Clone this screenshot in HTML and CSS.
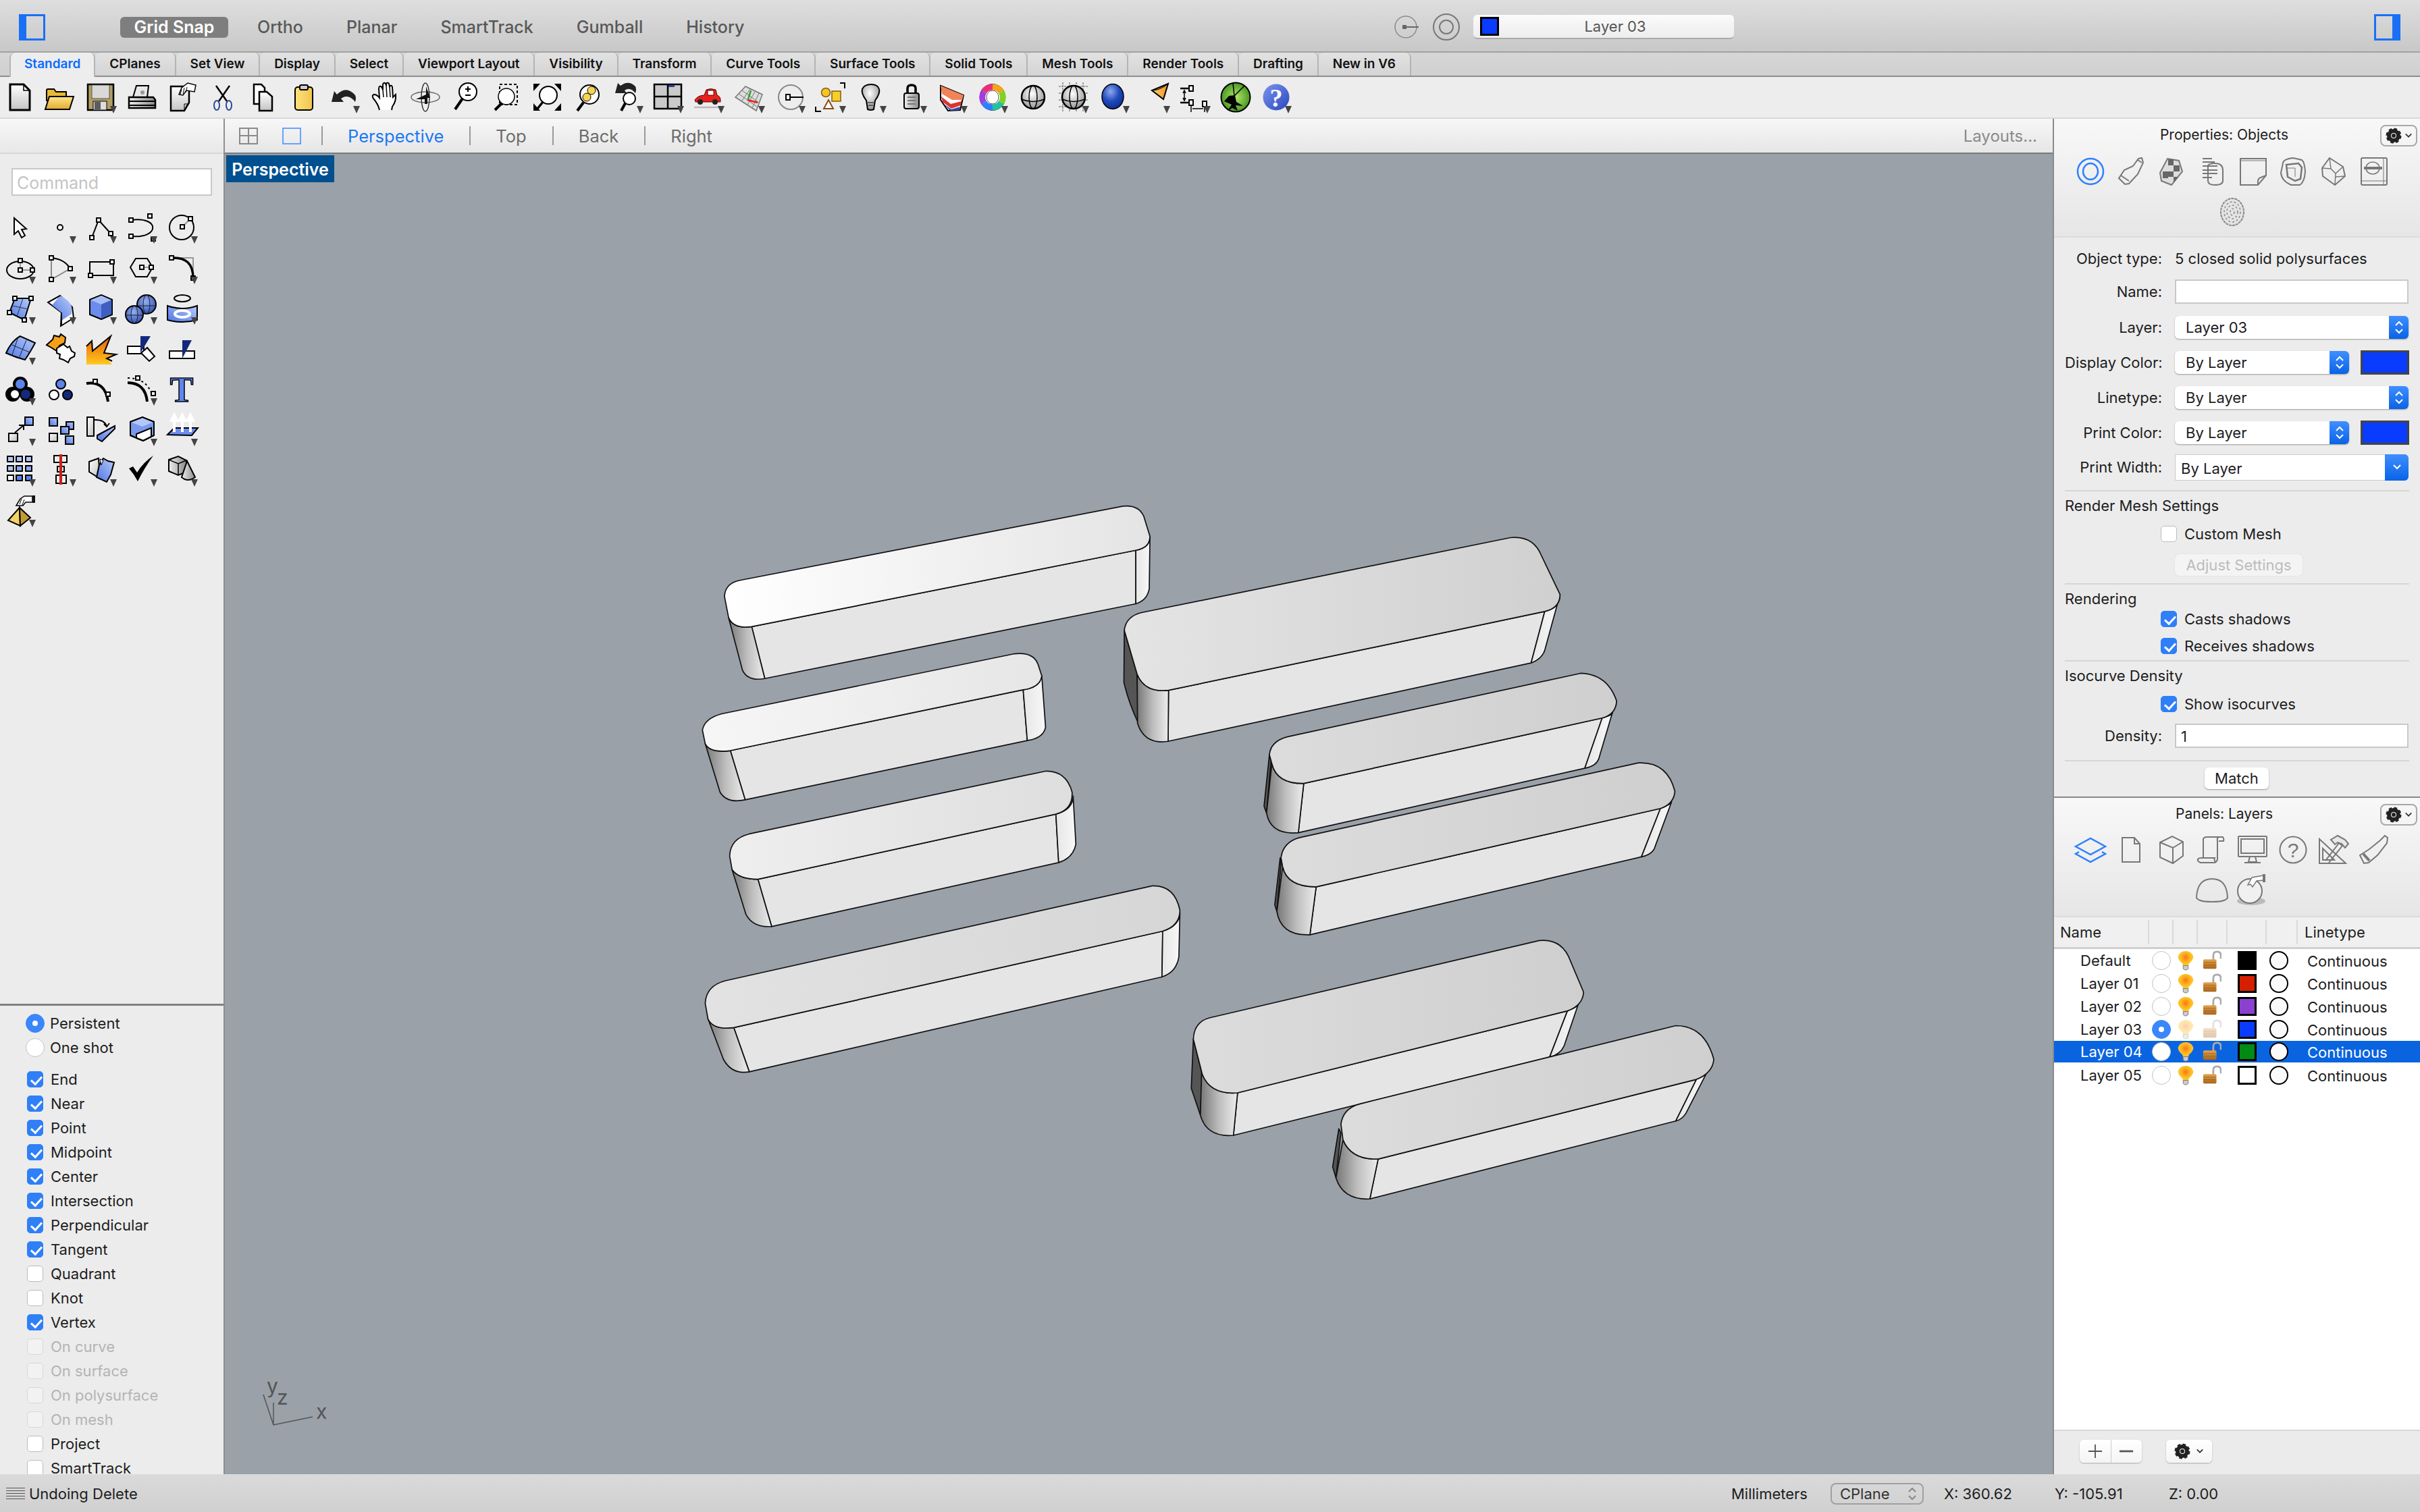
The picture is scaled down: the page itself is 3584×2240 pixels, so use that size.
FILE: index.html
```html
<!DOCTYPE html>
<html lang="en">
<head>
  <meta charset="UTF-8" />
  <title>Rhinoceros</title>
  <link rel="stylesheet" href="styles.css">
</head>
<body>

<!-- shared icons -->
<svg class="sprite" xmlns="http://www.w3.org/2000/svg">
  <defs>
    <linearGradient id="gPaper" x1="0" y1="0" x2="0" y2="1"><stop offset="0" stop-color="#fff"/><stop offset="1" stop-color="#c4c4c4"/></linearGradient>
    <linearGradient id="gYellow" x1="0" y1="0" x2="0" y2="1"><stop offset="0" stop-color="#ffe88a"/><stop offset="1" stop-color="#e0a92e"/></linearGradient>
    <linearGradient id="gClip" x1="0" y1="0" x2="1" y2="0"><stop offset="0" stop-color="#ffe27c"/><stop offset="1" stop-color="#f0c44c"/></linearGradient>
    <linearGradient id="gBlue" x1="0" y1="1" x2="1" y2="0"><stop offset="0" stop-color="#4d74e2"/><stop offset="1" stop-color="#b9ccfb"/></linearGradient>
    <linearGradient id="gWhite" x1="0" y1="0" x2="1" y2="1"><stop offset="0" stop-color="#fff"/><stop offset="1" stop-color="#bdbdbd"/></linearGradient>
    <linearGradient id="gGray" x1="0" y1="0" x2="1" y2="0"><stop offset="0" stop-color="#eee"/><stop offset="1" stop-color="#8a8a8a"/></linearGradient>
    <linearGradient id="gFire" x1="0" y1="0" x2="0" y2="1"><stop offset="0" stop-color="#e85d08"/><stop offset="1" stop-color="#ffc81e"/></linearGradient>
    <linearGradient id="gCone" x1="0" y1="0" x2="1" y2="0"><stop offset="0" stop-color="#ffd27a"/><stop offset="1" stop-color="#f2901e"/></linearGradient>
    <radialGradient id="gBall" cx=".4" cy=".3" r=".8"><stop offset="0" stop-color="#8fa9ec"/><stop offset=".5" stop-color="#1f49bd"/><stop offset="1" stop-color="#0a2a80"/></radialGradient>
    <radialGradient id="gGrayBall" cx=".45" cy=".35" r=".7"><stop offset="0" stop-color="#fff"/><stop offset="1" stop-color="#8b8b8b"/></radialGradient>
    <radialGradient id="gSphereBlue" cx=".45" cy=".35" r=".7"><stop offset="0" stop-color="#97b0f0"/><stop offset="1" stop-color="#2c4aa8"/></radialGradient>
    <radialGradient id="gGreen" cx=".5" cy=".5" r=".55"><stop offset="0" stop-color="#b4e86a"/><stop offset="1" stop-color="#3e8f1c"/></radialGradient>
    <linearGradient id="gHelp" x1="0" y1="0" x2="1" y2="1"><stop offset="0" stop-color="#7c94ea"/><stop offset="1" stop-color="#2a46c2"/></linearGradient>
    <radialGradient id="gBulb" cx=".5" cy=".4" r=".6"><stop offset="0" stop-color="#f6761a"/><stop offset=".5" stop-color="#fdb71d"/><stop offset="1" stop-color="#ffd23a"/></radialGradient>
    <linearGradient id="gLock" x1="0" y1="0" x2="0" y2="1"><stop offset="0" stop-color="#e6a54e"/><stop offset="1" stop-color="#a9641c"/></linearGradient>
  </defs>

  <!-- top toolbar -->
  <symbol id="t-new" viewBox="0 0 60 60"><path d="M15 11H35L44 20V49H15Z" fill="url(#gPaper)" stroke="#000" stroke-width="3"/><path d="M35 11V20H44" fill="none" stroke="#000" stroke-width="1.5"/></symbol>
  <symbol id="t-open" viewBox="0 0 60 60"><path d="M9 36V20q0-2 2-2h9l3 4h15v8" fill="#e8b838" stroke="#000" stroke-width="2"/><path d="M7 48 13 29H49L43 48Z" fill="url(#gYellow)" stroke="#000" stroke-width="2"/></symbol>
  <symbol id="t-save" viewBox="0 0 60 60"><rect x="10" y="11" width="38" height="38" fill="#b39d62" stroke="#000" stroke-width="2.5"/><rect x="16" y="12" width="26" height="20" fill="#d9d9d9" stroke="#555"/><rect x="18" y="36" width="20" height="13" fill="#ddd" stroke="#000"/><rect x="20" y="37" width="9" height="11" fill="#5c5c5c"/></symbol>
  <symbol id="t-print" viewBox="0 0 60 60"><path d="M17 30 22 13H40L38 30Z" fill="#e8e8e8" stroke="#000" stroke-width="2"/><circle cx="31" cy="23" r="3" fill="#999"/><path d="M11 30H47L50 34V46H11Z" fill="url(#gGray)" stroke="#000" stroke-width="2.5"/><path d="M11 36H50M11 42H50" stroke="#000" stroke-width="2"/></symbol>
  <symbol id="t-setup" viewBox="0 0 60 60"><path d="M13 14H40V38L33 50H13Z" fill="url(#gPaper)" stroke="#000" stroke-width="2.5"/><path d="M33 50V40H40" fill="none" stroke="#000"/><path d="M25 26 29 16 38 9 50 12 48 22 36 20 31 27Z" fill="#fff" stroke="#000" stroke-width="1.5"/><path d="M29 18 27 26M33 16 31 25M37 15 35 23" stroke="#000"/></symbol>
  <symbol id="t-cut" viewBox="0 0 60 60"><path d="M20 13 36 36M40 13 24 36" stroke="#000" stroke-width="2.5"/><ellipse cx="21" cy="42" rx="4" ry="7" fill="none" stroke="#2a4a9c" stroke-width="2"/><ellipse cx="39" cy="42" rx="4" ry="7" fill="none" stroke="#2a4a9c" stroke-width="2"/></symbol>
  <symbol id="t-copy" viewBox="0 0 60 60"><path d="M16 11H27L32 16V40H16Z" fill="#fff" stroke="#000" stroke-width="2.5"/><path d="M24 22H35L43 29V50H24Z" fill="url(#gPaper)" stroke="#000" stroke-width="2.5"/></symbol>
  <symbol id="t-paste" viewBox="0 0 60 60"><rect x="17" y="15" width="26" height="34" rx="4" fill="url(#gClip)" stroke="#000" stroke-width="2"/><rect x="24" y="12" width="12" height="7" rx="2" fill="#d0d0d0" stroke="#000" stroke-width="2"/></symbol>
  <symbol id="t-undo" viewBox="0 0 60 60"><path d="M11 37 15 21 19 26Q33 12 46 27 48 31 46 37 36 24 25 32L29 37Z" fill="#222"/></symbol>
  <symbol id="t-hand" viewBox="0 0 60 60"><path d="M22 49Q20 40 13 32 10 27 14 26 18 26 22 31L21 18Q21 13 24 14 26 15 27 19V11Q28 8 30 9 32 10 32 13V10Q34 7 36 10L37 14Q40 11 41 15L42 30 46 26Q47 36 41 44L40 49" fill="#fff" stroke="#000" stroke-width="2"/><path d="M27 19 28 30M32 13 33 30M37 14 38 30" stroke="#000" stroke-width="1.5"/></symbol>
  <symbol id="t-orbit" viewBox="0 0 60 60"><ellipse cx="30" cy="30" rx="21" ry="8" fill="none" stroke="#666" stroke-width="1.5"/><ellipse cx="30" cy="30" rx="6" ry="21" fill="none" stroke="#333" stroke-width="1.5"/><path d="M31 14 37 31H33V40H29V33H16L31 26Z" fill="#111"/></symbol>
  <symbol id="t-zoomin" viewBox="0 0 60 60"><circle cx="33" cy="22" r="13" fill="#fff" stroke="#000" stroke-width="2"/><path d="M25 32 14 48" stroke="#000" stroke-width="4"/><path d="M33 14V22M29 18H37M29 27H37" stroke="#000" stroke-width="2"/></symbol>
  <symbol id="t-zoomwin" viewBox="0 0 60 60"><rect x="20" y="11" width="26" height="30" fill="none" stroke="#000" stroke-width="2" stroke-dasharray="4 3"/><circle cx="30" cy="29" r="12" fill="#fff" stroke="#000" stroke-width="1.5"/><path d="M23 39 13 49" stroke="#000" stroke-width="4"/></symbol>
  <symbol id="t-zoomext" viewBox="0 0 60 60"><path d="M10 10H20L10 21ZM51 10H41L51 21ZM10 50H20L10 39ZM51 50H41L51 39Z" fill="#000"/><circle cx="32" cy="27" r="13" fill="#fff" stroke="#000" stroke-width="2"/><path d="M24 37 16 47" stroke="#000" stroke-width="3.5"/></symbol>
  <symbol id="t-zoomsel" viewBox="0 0 60 60"><circle cx="33" cy="26" r="14" fill="#fff" stroke="#000" stroke-width="2"/><circle cx="36" cy="20" r="6" fill="#f7d44e" stroke="#000"/><circle cx="29" cy="30" r="6" fill="#f7d44e" stroke="#000"/><path d="M24 38 15 50" stroke="#000" stroke-width="4"/></symbol>
  <symbol id="t-undoview" viewBox="0 0 60 60"><path d="M11 24 15 9 19 13Q31 4 41 14 43 18 41 24 33 14 25 20L28 24Z" fill="#222"/><circle cx="32" cy="32" r="9" fill="#fff" stroke="#000" stroke-width="2"/><path d="M26 39 20 50" stroke="#000" stroke-width="4"/></symbol>
  <symbol id="t-fourview" viewBox="0 0 60 60"><rect x="9" y="11" width="40" height="36" fill="#c9c9c9" stroke="#000" stroke-width="2.5"/><path d="M29 11V47M9 29H49" stroke="#000" stroke-width="2.5"/><rect x="30" y="12" width="9" height="3" fill="#2a3f95"/></symbol>
  <symbol id="t-car" viewBox="0 0 60 60"><path d="M9 34Q14 27 23 27L26 19Q32 16 40 19L42 27Q48 29 47 37H10Z" fill="#e5231c" stroke="#600" stroke-width="1"/><rect x="28" y="20" width="9" height="7" fill="#fff" stroke="#600"/><circle cx="17" cy="37" r="4" fill="#222"/><circle cx="39" cy="37" r="4" fill="#222"/><path d="M8 45H48" stroke="#bbb" stroke-width="2.5"/></symbol>
  <symbol id="t-cplane" viewBox="0 0 60 60"><path d="M24 14 49 26 40 50 9 30Z" fill="#ddd" stroke="#777" stroke-width="1.5"/><path d="M19 20 44 38M14 25 41 44M31 18 19 35M38 22 27 41M44 24 34 46" stroke="#777"/><path d="M27 34 42 38" stroke="#e0211c" stroke-width="2.5"/><path d="M28 33 32 20" stroke="#2ca02c" stroke-width="2.5"/></symbol>
  <symbol id="t-target" viewBox="0 0 60 60"><circle cx="31" cy="30" r="18" fill="none" stroke="#888" stroke-width="2"/><rect x="24" y="26" width="6" height="8" fill="#fff" stroke="#000" stroke-width="2"/><path d="M30 30H50" stroke="#000" stroke-width="2"/></symbol>
  <symbol id="t-shapes" viewBox="0 0 60 60"><circle cx="23" cy="23" r="6.5" fill="#f4c52a" stroke="#8a5a10" stroke-width="1.5"/><rect x="32" y="21" width="13" height="15" fill="#f4d02a" stroke="#8a5a10" stroke-width="1.5"/><path d="M27 34 34 47H20Z" fill="#fff" stroke="#8a4a10" stroke-width="2"/><path d="M44 9H51V17M8 44V51H16" fill="none" stroke="#000" stroke-width="2"/></symbol>
  <symbol id="t-bulb" viewBox="0 0 60 60"><path d="M23 35Q15 24 17 18 20 11 30 11 40 11 42 18 44 24 36 35L34 48Q30 50 25 48Z" fill="url(#gGrayBall)" stroke="#000" stroke-width="2"/><path d="M25 38H34M26 42H33" stroke="#000"/></symbol>
  <symbol id="t-lock" viewBox="0 0 60 60"><path d="M24 24V17Q24 12 30 12 36 12 36 17V24" fill="none" stroke="#000" stroke-width="3.5"/><rect x="19" y="24" width="22" height="23" rx="3" fill="url(#gGray)" stroke="#000" stroke-width="2"/><path d="M24 30H36M24 35H36M24 40H36" stroke="#777" stroke-width="2"/></symbol>
  <symbol id="t-wedge" viewBox="0 0 60 60"><path d="M13 13 47 27 42 49 24 50 13 34Z" fill="#fff" stroke="#000" stroke-width="2"/><path d="M13 13 47 27 45 34 30 34 15 25Z" fill="#f28358"/><path d="M14 29 28 40 44 36 43 42 29 47 16 37Z" fill="#d33"/><path d="M18 40 29 48 42 44 41 49 27 50Z" fill="#2f4fa5"/></symbol>
  <symbol id="t-ring" viewBox="0 0 60 60"><ellipse cx="30" cy="30" rx="18.500" ry="19" fill="#fff" stroke="#000" stroke-width="1.500"/><g fill="none" stroke-width="9"><path d="M30 15A15 15 0 0 1 43 22" stroke="#f6a21d"/><path d="M43 22A15 15 0 0 1 43 38" stroke="#7ed321"/><path d="M43 38A15 15 0 0 1 30 45" stroke="#25c0a0"/><path d="M30 45A15 15 0 0 1 17 38" stroke="#2f80ff"/><path d="M17 38A15 15 0 0 1 17 22" stroke="#9b3fe0"/><path d="M17 22A15 15 0 0 1 30 15" stroke="#e8307a"/></g><ellipse cx="30" cy="30" rx="9" ry="10" fill="#fff" stroke="#555"/></symbol>
  <symbol id="t-sphere" viewBox="0 0 60 60"><circle cx="30" cy="30" r="17" fill="url(#gGrayBall)" stroke="#000" stroke-width="2.500"/><ellipse cx="30" cy="30" rx="6" ry="17" fill="none" stroke="#000" stroke-width="1.500"/><path d="M13 33Q30 40 47 33" fill="none" stroke="#000" stroke-width="1.500"/></symbol>
  <symbol id="t-gridsphere" viewBox="0 0 60 60"><path d="M8 14H52M8 24H52M8 34H52M8 44H52M14 8V52M24 8V52M34 8V52M44 8V52" stroke="#888" stroke-width="1.500" stroke-dasharray="3 1"/><circle cx="30" cy="30" r="17" fill="url(#gGrayBall)" stroke="#000" stroke-width="2.500"/><ellipse cx="30" cy="30" rx="6" ry="17" fill="none" stroke="#000" stroke-width="1.500"/><path d="M13 33Q30 40 47 33" fill="none" stroke="#000" stroke-width="1.500"/></symbol>
  <symbol id="t-ball" viewBox="0 0 60 60"><ellipse cx="28" cy="29" rx="16" ry="18.500" fill="url(#gBall)" stroke="#000" stroke-width="1.500"/></symbol>
  <symbol id="t-cone" viewBox="0 0 60 60"><path d="M26 20 50 10 43 33Z" fill="url(#gCone)" stroke="#000" stroke-width="2"/><path d="M26 20Q38 20 50 10" fill="none" stroke="#000"/></symbol>
  <symbol id="t-dims" viewBox="0 0 60 60"><path d="M8 17H22M8 38H22" stroke="#000" stroke-width="2.500"/><rect x="21" y="13" width="6" height="8" fill="#fff" stroke="#000" stroke-width="2"/><rect x="21" y="34" width="6" height="8" fill="#fff" stroke="#000" stroke-width="2"/><rect x="41" y="36" width="6" height="8" fill="#fff" stroke="#000" stroke-width="2"/><path d="M14 20V35M24 42V52M44 44V52M12 24 14 20 16 24M12 31 14 35 16 31M26 47H42" fill="none" stroke="#000" stroke-width="1.500"/></symbol>
  <symbol id="t-food" viewBox="0 0 60 60"><circle cx="30" cy="30" r="21.500" fill="url(#gGreen)" stroke="#000" stroke-width="2"/><path d="M26 9 28 28 43 13" fill="none" stroke="#000" stroke-width="1.500"/><path d="M20 28 29 27 31 37 41 43 30 42 33 50 25 46 18 50 24 41 13 36Z" fill="#000"/></symbol>

  <!-- left tool grid -->
  <symbol id="l-arrow" viewBox="0 0 60 60"><path d="M21 16V40L27 35 32 45 37 42 32 33 39 32Z" fill="#fff" stroke="#000" stroke-width="2"/></symbol>
  <symbol id="l-point" viewBox="0 0 60 60"><circle cx="29" cy="30" r="4" fill="#fff" stroke="#000" stroke-width="2"/></symbol>
  <symbol id="l-poly" viewBox="0 0 60 60"><path d="M16 45 26 19 44 39" fill="none" stroke="#000" stroke-width="2"/><g fill="#fff" stroke="#000" stroke-width="2"><rect x="13" y="42" width="6" height="6"/><rect x="23" y="16" width="6" height="6"/><rect x="41" y="36" width="6" height="6"/></g></symbol>
  <symbol id="l-curve" viewBox="0 0 60 60"><path d="M14 19C57 13 57 47 14 43" fill="none" stroke="#000" stroke-width="2"/><g fill="#fff" stroke="#000" stroke-width="2"><rect x="11" y="16" width="6" height="6"/><rect x="39" y="10" width="6" height="6"/><rect x="11" y="40" width="6" height="6"/><rect x="44" y="44" width="6" height="6"/></g></symbol>
  <symbol id="l-circle" viewBox="0 0 60 60"><circle cx="29" cy="30" r="18" fill="none" stroke="#000" stroke-width="2"/><path d="M30 29 42 17" stroke="#999" stroke-width="2"/><g fill="#fff" stroke="#000" stroke-width="2"><rect x="27" y="26" width="6" height="6"/><rect x="39" y="14" width="6" height="6"/></g></symbol>
  <symbol id="l-ellipse" viewBox="0 0 60 60"><ellipse cx="30" cy="33" rx="20" ry="13" fill="none" stroke="#000" stroke-width="2"/><path d="M30 19V33H48" fill="none" stroke="#999" stroke-width="2"/><g fill="#fff" stroke="#000" stroke-width="2"><rect x="27" y="16" width="6" height="6"/><rect x="27" y="30" width="6" height="6"/><rect x="45" y="30" width="6" height="6"/></g></symbol>
  <symbol id="l-arc" viewBox="0 0 60 60"><path d="M16 15V47L44 31" fill="none" stroke="#888" stroke-width="2"/><path d="M16 15Q36 17 44 31" fill="none" stroke="#000" stroke-width="2"/><g fill="#fff" stroke="#000" stroke-width="2"><rect x="13" y="12" width="6" height="6"/><rect x="13" y="44" width="6" height="6"/><rect x="41" y="28" width="6" height="6"/></g></symbol>
  <symbol id="l-rect" viewBox="0 0 60 60"><rect x="13" y="21" width="35" height="20" fill="none" stroke="#000" stroke-width="2"/><g fill="#fff" stroke="#000" stroke-width="2"><rect x="43" y="18" width="6" height="6"/><rect x="11" y="38" width="6" height="6"/></g></symbol>
  <symbol id="l-hex" viewBox="0 0 60 60"><path d="M13 29 21 16H38L46 29 38 43H21Z" fill="none" stroke="#000" stroke-width="2"/><path d="M30 29H44" stroke="#999" stroke-width="2"/><g fill="#fff" stroke="#000" stroke-width="2"><rect x="27" y="26" width="6" height="6"/><rect x="41" y="26" width="6" height="6"/></g></symbol>
  <symbol id="l-fillet" viewBox="0 0 60 60"><path d="M14 15H46V45" fill="none" stroke="#999" stroke-width="2"/><path d="M14 15Q46 13 46 45" fill="none" stroke="#000" stroke-width="3.500"/><g fill="#fff" stroke="#000" stroke-width="2"><rect x="11" y="12" width="6" height="6"/><rect x="43" y="42" width="6" height="6"/></g></symbol>
  <symbol id="l-surfpts" viewBox="0 0 60 60"><path d="M22 15H46L36 47 14 36Z" fill="url(#gBlue)" stroke="#000" stroke-width="2"/><path d="M34 15 25 42M18 26 42 31" stroke="#234" stroke-width="1"/><g fill="#fff" stroke="#000" stroke-width="2"><rect x="19" y="12" width="6" height="6"/><rect x="43" y="12" width="6" height="6"/><rect x="11" y="33" width="6" height="6"/><rect x="33" y="44" width="6" height="6"/></g></symbol>
  <symbol id="l-bend" viewBox="0 0 60 60"><path d="M11 21 29 11 47 28 49 44 30 56 31 36Z" fill="#fff" stroke="#000" stroke-width="2"/><path d="M17 25 29 11Q43 18 46 27V38L31 48 31 36Z" fill="url(#gBlue)"/><path d="M11 21 29 11M31 36V56" stroke="#000" stroke-width="2"/></symbol>
  <symbol id="l-cube" viewBox="0 0 60 60"><path d="M13 17 30 10 46 17V39L30 46 13 39Z" fill="#6b8ceb" stroke="#000" stroke-width="2"/><path d="M13 17 30 24 46 17 30 10Z" fill="#a6bdf7"/><path d="M30 24 46 17V39L30 46Z" fill="#3f5fc0"/><path d="M13 17 30 10 46 17V39L30 46 13 39Z" fill="none" stroke="#000" stroke-width="1.500"/></symbol>
  <symbol id="l-spheres" viewBox="0 0 60 60"><circle cx="37" cy="24" r="14" fill="url(#gSphereBlue)" stroke="#000" stroke-width="2"/><ellipse cx="37" cy="24" rx="5" ry="14" fill="none" stroke="#123"/><path d="M23 26H51" stroke="#123"/><circle cx="19" cy="39" r="13" fill="url(#gSphereBlue)" stroke="#000" stroke-width="2"/><ellipse cx="19" cy="39" rx="5" ry="13" fill="none" stroke="#123"/><path d="M6 40H32" stroke="#123"/></symbol>
  <symbol id="l-band" viewBox="0 0 60 60"><ellipse cx="30" cy="15" rx="12" ry="5" fill="none" stroke="#000" stroke-width="2"/><path d="M8 26Q30 34 52 26V47Q30 53 8 47Z" fill="url(#gBlue)" stroke="#000" stroke-width="2"/><ellipse cx="30" cy="38" rx="11" ry="5" fill="none" stroke="#fff" stroke-width="4"/></symbol>
  <symbol id="l-sheet" viewBox="0 0 60 60"><path d="M9 36Q17 18 30 11L52 21Q44 36 37 46Q22 42 9 36Z" fill="url(#gBlue)" stroke="#000" stroke-width="2"/><path d="M18 24 44 35M26 15 18 39M39 17 28 44" stroke="#123"/></symbol>
  <symbol id="l-puzzle" viewBox="0 0 60 60"><path d="M9 24 18 16 20 10 28 12 30 8 37 13 36 21 28 25 24 33 16 28Z" fill="#f6a01a" stroke="#000" stroke-width="2"/><path d="M24 29 34 23 40 28 43 26 46 33 51 36 50 41 44 44 41 50 34 46 28 44 29 38 24 36Z" fill="#fff" stroke="#000" stroke-width="2"/></symbol>
  <symbol id="l-boom" viewBox="0 0 60 60"><path d="M8 53V26L16 18 17 33 44 11 34 36 52 38 38 44 46 53Z" fill="url(#gFire)"/><path d="M8 26 16 18 17 33 44 11 34 36 52 38 38 44 46 48" fill="none" stroke="#000" stroke-width="2"/></symbol>
  <symbol id="l-chamfer" viewBox="0 0 60 60"><rect x="9" y="26" width="24" height="11" fill="#fff" stroke="#000" stroke-width="2"/><path d="M28 11H43L28 36Z" fill="#15297a"/><path d="M29 36 38 28 49 41 41 48Z" fill="#fff" stroke="#000" stroke-width="2"/></symbol>
  <symbol id="l-trim" viewBox="0 0 60 60"><rect x="11" y="33" width="37" height="11" fill="#fff" stroke="#000" stroke-width="2"/><path d="M30 17H44L30 44Z" fill="#15297a"/></symbol>
  <symbol id="l-union" viewBox="0 0 60 60"><circle cx="30" cy="22" r="11" fill="#000"/><circle cx="19" cy="37" r="11" fill="#000"/><circle cx="40" cy="37" r="11" fill="#000"/><circle cx="30" cy="22" r="7" fill="#5c83ea"/><circle cx="22" cy="37" r="6" fill="#fff"/><circle cx="38" cy="37" r="7" fill="#15297a"/></symbol>
  <symbol id="l-dots" viewBox="0 0 60 60"><circle cx="30" cy="22" r="7" fill="#5c83ea" stroke="#000" stroke-width="2"/><circle cx="20" cy="38" r="7" fill="#fff" stroke="#000" stroke-width="2"/><circle cx="40" cy="38" r="7" fill="#15297a" stroke="#000" stroke-width="2"/></symbol>
  <symbol id="l-thickarc" viewBox="0 0 60 60"><path d="M8 21Q36 17 40 48" fill="none" stroke="#000" stroke-width="4"/><g fill="#fff" stroke="#000" stroke-width="2"><rect x="18" y="15" width="6" height="6"/><rect x="37" y="34" width="6" height="6"/></g></symbol>
  <symbol id="l-offset" viewBox="0 0 60 60"><path d="M9 20Q35 20 38 48" fill="none" stroke="#000" stroke-width="4"/><path d="M9 13Q38 13 46 40" fill="none" stroke="#000" stroke-width="2" stroke-dasharray="3 4"/><g fill="#fff" stroke="#000" stroke-width="2"><rect x="21" y="10" width="6" height="6"/><rect x="44" y="33" width="6" height="6"/></g></symbol>
  <symbol id="l-move" viewBox="0 0 60 60"><rect x="13" y="35" width="13" height="12" fill="url(#gWhite)" stroke="#000" stroke-width="2"/><rect x="37" y="11" width="12" height="12" fill="url(#gBlue)" stroke="#000" stroke-width="2"/><path d="M22 34 35 23M28 23H35V30" fill="none" stroke="#000" stroke-width="2"/></symbol>
  <symbol id="l-copyobj" viewBox="0 0 60 60"><g stroke="#000" stroke-width="2"><rect x="13" y="12" width="12" height="12" fill="url(#gBlue)"/><rect x="38" y="18" width="11" height="11" fill="url(#gBlue)"/><rect x="30" y="25" width="12" height="11" fill="url(#gBlue)"/><rect x="13" y="35" width="12" height="12" fill="url(#gWhite)"/><rect x="37" y="39" width="12" height="12" fill="url(#gBlue)"/></g></symbol>
  <symbol id="l-rotate" viewBox="0 0 60 60"><rect x="9" y="11" width="10" height="28" fill="url(#gWhite)" stroke="#000" stroke-width="2"/><path d="M24 38 50 24 50 28 31 47 24 43Z" fill="url(#gBlue)" stroke="#000" stroke-width="2"/><path d="M19 15Q35 14 38 25M34 21 38 25 42 20" fill="none" stroke="#000" stroke-width="2"/></symbol>
  <symbol id="l-notch" viewBox="0 0 60 60"><path d="M13 18 31 11 48 18V38L32 46 13 38Z" fill="#7a99ee" stroke="#000" stroke-width="2"/><path d="M13 18 31 25 48 18 31 11Z" fill="#b3c6f9"/><path d="M32 32 44 27V40L32 46 22 42V36Z" fill="#fff" stroke="#000" stroke-width="2"/><path d="M13 18 31 11 48 18V38L32 46 13 38Z" fill="none" stroke="#000" stroke-width="2"/></symbol>
  <symbol id="l-extrude" viewBox="0 0 60 60"><path d="M8 37 18 27H53L44 38Z" fill="#6d8ef0" stroke="#000" stroke-width="2"/><path d="M18 33V15M14 16 18 8 22 16ZM30 33V15M26 16 30 8 34 16ZM42 33V15M38 16 42 8 46 16Z" fill="#fff" stroke="#fff" stroke-width="4"/></symbol>
  <symbol id="l-array" viewBox="0 0 60 60"><g stroke="#000" stroke-width="2"><rect x="11" y="9" width="9" height="8" fill="#b4c6f6"/><rect x="24" y="9" width="9" height="8" fill="#b4c6f6"/><rect x="38" y="9" width="9" height="8" fill="#b4c6f6"/><rect x="11" y="23" width="9" height="8" fill="#b4c6f6"/><rect x="24" y="23" width="9" height="8" fill="#8fa8ef"/><rect x="38" y="23" width="9" height="8" fill="#8fa8ef"/><rect x="11" y="37" width="9" height="8" fill="#fff"/><rect x="24" y="37" width="9" height="8" fill="#5c83ea"/><rect x="38" y="37" width="9" height="8" fill="#5c83ea"/></g></symbol>
  <symbol id="l-mirror" viewBox="0 0 60 60"><g stroke="#000" stroke-width="2" fill="#eee"><rect x="20" y="8" width="19" height="10"/><rect x="25" y="24" width="10" height="8"/><rect x="23" y="37" width="15" height="12"/></g><path d="M30 6V51" stroke="#c9211a" stroke-width="4"/></symbol>
  <symbol id="l-split" viewBox="0 0 60 60"><path d="M12 17 26 12 28 42 12 32Z" fill="url(#gWhite)" stroke="#000" stroke-width="2"/><path d="M27 22 33 12 40 16 49 18 44 36 38 47 23 40Z" fill="url(#gBlue)" stroke="#000" stroke-width="2"/><path d="M28 13 33 15 30 22Z" fill="#fff" stroke="#000"/></symbol>
  <symbol id="l-check" viewBox="0 0 60 60"><path d="M11 27 17 24 23 33Q32 18 47 8 34 26 24 46 19 36 11 27Z" fill="#000"/></symbol>
  <symbol id="l-solids" viewBox="0 0 60 60"><path d="M10 14 24 9 36 15V32L24 37 10 31Z" fill="url(#gGray)" stroke="#000" stroke-width="2"/><path d="M10 14 24 20 36 15M24 20V37" fill="none" stroke="#000" stroke-width="1.500"/><path d="M37 16 49 40Q38 48 29 40Z" fill="url(#gGray)" stroke="#000" stroke-width="2"/></symbol>
  <symbol id="l-gumball" viewBox="0 0 60 60"><path d="M24 22 30 12 36 8H48V17H38L34 22Z" fill="#fff" stroke="#000" stroke-width="1.500"/><path d="M32 12 29 20M36 13 33 21" stroke="#000"/><rect x="48" y="7" width="4" height="11" fill="#111"/><path d="M12 44 29 25 30 52Z" fill="#f4d264" stroke="#000" stroke-width="2"/><path d="M29 25 45 40 30 52Z" fill="#c29a34" stroke="#000" stroke-width="2"/></symbol>

  <!-- properties and layer tabs -->
  <symbol id="p-object" viewBox="0 0 60 60"><ellipse cx="30" cy="30" rx="19" ry="19" fill="none" stroke="#2f80ff" stroke-width="2.500"/><ellipse cx="30" cy="30" rx="11" ry="12" fill="none" stroke="#2f80ff" stroke-width="2.500"/></symbol>
  <symbol id="p-tube" viewBox="0 0 60 60"><path d="M12 40 20 28 33 22 41 11 46 10 48 17 40 34 27 48 21 49Z" fill="none" stroke="#777" stroke-width="2"/><path d="M15 36 27 44M40 13 46 17" stroke="#777" stroke-width="2"/></symbol>
  <symbol id="p-check" viewBox="0 0 60 60"><path d="M13 32 24 11 41 14 46 30 30 50 15 44Z" fill="#ddd" stroke="#777" stroke-width="2"/><path d="M25 12H33V21H25ZM33 21H42V30H33ZM17 30H25V40H17ZM33 38H25V30H33ZM33 38H40L33 47Z" fill="#666"/></symbol>
  <symbol id="p-attrs" viewBox="0 0 60 60"><path d="M16 11H30M16 16H34M16 22H38M16 28H38M16 33H38M16 39H30" stroke="#777" stroke-width="2"/><path d="M24 22Q24 18 34 18 46 18 46 28V44Q46 50 34 50 24 50 24 44Z" fill="none" stroke="#777" stroke-width="2"/></symbol>
  <symbol id="p-page" viewBox="0 0 60 60"><path d="M12 11H50V36L38 50H12Z" fill="none" stroke="#777" stroke-width="2"/><path d="M12 14H50" stroke="#777"/><path d="M38 50Q37 40 42 39L50 36" fill="none" stroke="#777" stroke-width="2"/></symbol>
  <symbol id="p-box" viewBox="0 0 60 60"><path d="M15 18Q15 12 30 10L43 13Q47 16 48 30 47 46 40 50H27Q13 44 12 32Z" fill="none" stroke="#777" stroke-width="2"/><path d="M20 20 38 18 43 24 41 41 33 44 22 38Z" fill="none" stroke="#777" stroke-width="2.500"/><path d="M20 25H33V38" fill="none" stroke="#777"/></symbol>
  <symbol id="p-bent" viewBox="0 0 60 60"><path d="M13 25 24 10 44 23 47 37 32 50 14 37Z" fill="none" stroke="#777" stroke-width="2"/><path d="M13 25 26 26 33 33 44 23M26 26 24 10M33 33 32 50M33 38 47 37" fill="none" stroke="#777" stroke-width="1.500"/></symbol>
  <symbol id="p-decal" viewBox="0 0 60 60"><rect x="11" y="10" width="38" height="40" rx="2" fill="none" stroke="#777" stroke-width="2"/><path d="M11 44H49M44 10V50" stroke="#777"/><ellipse cx="28" cy="25" rx="10" ry="9" fill="none" stroke="#777" stroke-width="1.500"/><path d="M15 25H42" stroke="#777" stroke-width="4"/></symbol>
  <symbol id="p-bump" viewBox="0 0 60 60"><ellipse cx="30" cy="30" rx="17" ry="20" fill="#e4e4e4" stroke="#888" stroke-width="2" stroke-dasharray="4 1"/><g fill="none" stroke="#888" stroke-width="1.500" stroke-dasharray="3 3"><ellipse cx="30" cy="30" rx="12" ry="15"/><ellipse cx="30" cy="30" rx="8" ry="10"/><ellipse cx="30" cy="30" rx="3" ry="5"/></g></symbol>
  <symbol id="g-layers" viewBox="0 0 60 60"><path d="M8 25 30 13 52 25 30 37Z" fill="none" stroke="#2f80ff" stroke-width="2.500"/><path d="M13 33 8 36 30 48 52 36 47 33" fill="none" stroke="#2f80ff" stroke-width="2.500"/></symbol>
  <symbol id="g-doc" viewBox="0 0 60 60"><path d="M17 12H35L43 21V48H17ZM35 12V21H43" fill="none" stroke="#777" stroke-width="2"/></symbol>
  <symbol id="g-cube" viewBox="0 0 60 60"><path d="M13 19 31 10 47 18V39L32 50 13 41ZM13 19 32 27 47 18M32 27V50" fill="none" stroke="#777" stroke-width="2"/></symbol>
  <symbol id="g-scroll" viewBox="0 0 60 60"><path d="M17 42V14Q18 11 22 11H46Q48 14 47 17H40M40 11Q37 12 38 17V44Q37 49 32 49H13Q8 47 9 44 10 42 14 42H34Q32 45 36 49" fill="none" stroke="#777" stroke-width="2"/></symbol>
  <symbol id="g-monitor" viewBox="0 0 60 60"><rect x="9" y="10" width="42" height="30" rx="1" fill="none" stroke="#777" stroke-width="2"/><rect x="13" y="14" width="34" height="21" fill="none" stroke="#777" stroke-width="2"/><path d="M26 40 24 48H36L34 40M18 49H42" fill="none" stroke="#777" stroke-width="2"/></symbol>
  <symbol id="g-tools" viewBox="0 0 60 60"><path d="M9 14V50H48ZM14 28V45H31Z" fill="none" stroke="#777" stroke-width="2"/><path d="M18 46 38 20M23 49 43 24 38 20" fill="none" stroke="#777" stroke-width="2"/><path d="M26 15 36 9 47 15 52 21 47 27 42 21 36 19 32 22Z" fill="#e8e8e8" stroke="#777" stroke-width="2"/></symbol>
  <symbol id="g-tube" viewBox="0 0 60 60"><path d="M9 38 23 29 39 16 46 9 50 12 49 20 35 38 22 49 15 50Z" fill="none" stroke="#777" stroke-width="2"/><path d="M14 36 23 46" stroke="#777" stroke-width="4"/></symbol>
  <symbol id="g-dome" viewBox="0 0 60 60"><path d="M7 41Q8 13 30 13 52 13 53 41 50 47 30 47 10 47 7 41Z" fill="none" stroke="#777" stroke-width="2"/></symbol>
  <symbol id="g-drop" viewBox="0 0 60 60"><ellipse cx="28" cy="46" rx="21" ry="6" fill="#bbb"/><circle cx="26" cy="31" r="18" fill="#f0f0f0" stroke="#777" stroke-width="2"/><path d="M23 22 29 11 46 8V15L36 16 30 25 27 21Z" fill="#fff" stroke="#777" stroke-width="1.500"/><rect x="45" y="6" width="4" height="12" fill="#777"/></symbol>

  <!-- small bits -->
  <symbol id="gear" viewBox="0 0 24 24"><circle cx="12" cy="12" r="7" fill="none" stroke="#222" stroke-width="6"/><circle cx="12" cy="12" r="9" fill="none" stroke="#222" stroke-width="5" stroke-dasharray="4.100 3"/><circle cx="12" cy="12" r="3" fill="#222"/></symbol>
  <symbol id="updown" viewBox="0 0 14 22"><path d="M2 8 7 3 12 8M2 14 7 19 12 14" fill="none" stroke="currentColor" stroke-width="2"/></symbol>
  <symbol id="chev" viewBox="0 0 14 10"><path d="M2 2 7 7 12 2" fill="none" stroke="currentColor" stroke-width="2"/></symbol>
  <symbol id="bulb" viewBox="0 0 28 32"><path d="M9 21Q1 14 2 9 5 1 14 1 23 1 26 9 27 14 19 21L18 26H10Z" fill="url(#gBulb)"/><path d="M10 24H18V29Q14 33 10 29Z" fill="#ccc" stroke="#777"/></symbol>
  <symbol id="lock" viewBox="0 0 30 32"><path d="M17 17V8Q17 2 23 2 29 2 29 8V13" fill="none" stroke="#aaa" stroke-width="3"/><rect x="1" y="14" width="21" height="15" rx="2" fill="url(#gLock)"/><path d="M2 19H21M2 23H21" stroke="#8a5414" stroke-dasharray="2 1"/></symbol>
</svg>

<header class="titlebar">
  <svg class="side-toggle" viewBox="0 0 39 39"><rect x="1.500" y="1.500" width="36" height="36" fill="none" stroke="#1a6ff5" stroke-width="3"/><rect x="1" y="1" width="10" height="37" fill="#1a6ff5"/></svg>
  <nav class="modes">
    <span class="mode on">Grid Snap</span>
    <span class="mode">Ortho</span>
    <span class="mode">Planar</span>
    <span class="mode">SmartTrack</span>
    <span class="mode">Gumball</span>
    <span class="mode">History</span>
  </nav>
  <div class="title-status">
    <svg class="ring-btn small" viewBox="0 0 38 34"><circle cx="19" cy="17" r="16" fill="none" stroke="#8b8b8b" stroke-width="1.500"/><rect x="14" y="14" width="6" height="6" fill="#666"/><path d="M20 17H38" stroke="#666" stroke-width="2"/></svg>
    <svg class="ring-btn" viewBox="0 0 40 42"><circle cx="20" cy="21" r="19" fill="none" stroke="#777" stroke-width="2"/><circle cx="20" cy="21" r="10" fill="none" stroke="#777" stroke-width="2"/></svg>
    <div class="layer-pick"><span class="layer-swatch"></span><span class="layer-pick-name">Layer 03</span></div>
  </div>
  <svg class="side-toggle right" viewBox="0 0 39 39"><rect x="1.500" y="1.500" width="36" height="36" fill="none" stroke="#1a6ff5" stroke-width="3"/><rect x="27" y="1" width="11" height="37" fill="#1a6ff5"/></svg>
</header>

<div class="tabbar">
  <span class="tab active">Standard</span>
  <span class="tab">CPlanes</span>
  <span class="tab">Set View</span>
  <span class="tab">Display</span>
  <span class="tab">Select</span>
  <span class="tab">Viewport Layout</span>
  <span class="tab">Visibility</span>
  <span class="tab">Transform</span>
  <span class="tab">Curve Tools</span>
  <span class="tab">Surface Tools</span>
  <span class="tab">Solid Tools</span>
  <span class="tab">Mesh Tools</span>
  <span class="tab">Render Tools</span>
  <span class="tab">Drafting</span>
  <span class="tab">New in V6</span>
</div>

<div class="toolbar">
  <span class="tool"><svg><use href="#t-new"/></svg></span>
  <span class="tool"><svg><use href="#t-open"/></svg></span>
  <span class="tool menu"><svg><use href="#t-save"/></svg></span>
  <span class="tool"><svg><use href="#t-print"/></svg></span>
  <span class="tool"><svg><use href="#t-setup"/></svg></span>
  <span class="tool"><svg><use href="#t-cut"/></svg></span>
  <span class="tool"><svg><use href="#t-copy"/></svg></span>
  <span class="tool"><svg><use href="#t-paste"/></svg></span>
  <span class="tool menu"><svg><use href="#t-undo"/></svg></span>
  <span class="tool"><svg><use href="#t-hand"/></svg></span>
  <span class="tool"><svg><use href="#t-orbit"/></svg></span>
  <span class="tool"><svg><use href="#t-zoomin"/></svg></span>
  <span class="tool"><svg><use href="#t-zoomwin"/></svg></span>
  <span class="tool"><svg><use href="#t-zoomext"/></svg></span>
  <span class="tool"><svg><use href="#t-zoomsel"/></svg></span>
  <span class="tool menu"><svg><use href="#t-undoview"/></svg></span>
  <span class="tool menu"><svg><use href="#t-fourview"/></svg></span>
  <span class="tool menu"><svg><use href="#t-car"/></svg></span>
  <span class="tool menu"><svg><use href="#t-cplane"/></svg></span>
  <span class="tool menu"><svg><use href="#t-target"/></svg></span>
  <span class="tool menu"><svg><use href="#t-shapes"/></svg></span>
  <span class="tool menu"><svg><use href="#t-bulb"/></svg></span>
  <span class="tool menu"><svg><use href="#t-lock"/></svg></span>
  <span class="tool menu"><svg><use href="#t-wedge"/></svg></span>
  <span class="tool menu"><svg><use href="#t-ring"/></svg></span>
  <span class="tool"><svg><use href="#t-sphere"/></svg></span>
  <span class="tool menu"><svg><use href="#t-gridsphere"/></svg></span>
  <span class="tool menu"><svg><use href="#t-ball"/></svg></span>
  <span class="tool menu"><svg><use href="#t-cone"/></svg></span>
  <span class="tool menu"><svg><use href="#t-dims"/></svg></span>
  <span class="tool"><svg><use href="#t-food"/></svg></span>
  <span class="tool menu"><svg viewBox="0 0 60 60"><circle cx="30" cy="30" r="19.500" fill="url(#gHelp)"/><text class="icon-help" x="30" y="44" text-anchor="middle">?</text></svg></span>
</div>

<main class="workspace">
  <aside class="left-panel">
    <div class="left-head"></div>
    <div class="left-tools">
      <div class="command">Command</div>
      <div class="tool-grid">
        <span class="tool"><svg><use href="#l-arrow"/></svg></span>
        <span class="tool menu"><svg><use href="#l-point"/></svg></span>
        <span class="tool menu"><svg><use href="#l-poly"/></svg></span>
        <span class="tool menu"><svg><use href="#l-curve"/></svg></span>
        <span class="tool menu"><svg><use href="#l-circle"/></svg></span>
        <span class="tool menu"><svg><use href="#l-ellipse"/></svg></span>
        <span class="tool menu"><svg><use href="#l-arc"/></svg></span>
        <span class="tool menu"><svg><use href="#l-rect"/></svg></span>
        <span class="tool menu"><svg><use href="#l-hex"/></svg></span>
        <span class="tool menu"><svg><use href="#l-fillet"/></svg></span>
        <span class="tool menu"><svg><use href="#l-surfpts"/></svg></span>
        <span class="tool menu"><svg><use href="#l-bend"/></svg></span>
        <span class="tool menu"><svg><use href="#l-cube"/></svg></span>
        <span class="tool menu"><svg><use href="#l-spheres"/></svg></span>
        <span class="tool menu"><svg><use href="#l-band"/></svg></span>
        <span class="tool menu"><svg><use href="#l-sheet"/></svg></span>
        <span class="tool"><svg><use href="#l-puzzle"/></svg></span>
        <span class="tool"><svg><use href="#l-boom"/></svg></span>
        <span class="tool"><svg><use href="#l-chamfer"/></svg></span>
        <span class="tool"><svg><use href="#l-trim"/></svg></span>
        <span class="tool menu"><svg><use href="#l-union"/></svg></span>
        <span class="tool"><svg><use href="#l-dots"/></svg></span>
        <span class="tool"><svg><use href="#l-thickarc"/></svg></span>
        <span class="tool menu"><svg><use href="#l-offset"/></svg></span>
        <span class="tool"><svg viewBox="0 0 60 60"><text class="icon-t" x="29" y="48" text-anchor="middle">T</text></svg></span>
        <span class="tool menu"><svg><use href="#l-move"/></svg></span>
        <span class="tool"><svg><use href="#l-copyobj"/></svg></span>
        <span class="tool"><svg><use href="#l-rotate"/></svg></span>
        <span class="tool menu"><svg><use href="#l-notch"/></svg></span>
        <span class="tool menu"><svg><use href="#l-extrude"/></svg></span>
        <span class="tool menu"><svg><use href="#l-array"/></svg></span>
        <span class="tool menu"><svg><use href="#l-mirror"/></svg></span>
        <span class="tool menu"><svg><use href="#l-split"/></svg></span>
        <span class="tool menu"><svg><use href="#l-check"/></svg></span>
        <span class="tool menu"><svg><use href="#l-solids"/></svg></span>
        <span class="tool menu"><svg><use href="#l-gumball"/></svg></span>
      </div>
    </div>
    <div class="snaps">
      <label class="snap"><span class="radio on"></span>Persistent</label>
      <label class="snap"><span class="radio"></span>One shot</label>
      <div class="snap-list">
        <label class="snap"><span class="check on"></span>End</label>
        <label class="snap"><span class="check on"></span>Near</label>
        <label class="snap"><span class="check on"></span>Point</label>
        <label class="snap"><span class="check on"></span>Midpoint</label>
        <label class="snap"><span class="check on"></span>Center</label>
        <label class="snap"><span class="check on"></span>Intersection</label>
        <label class="snap"><span class="check on"></span>Perpendicular</label>
        <label class="snap"><span class="check on"></span>Tangent</label>
        <label class="snap"><span class="check"></span>Quadrant</label>
        <label class="snap"><span class="check"></span>Knot</label>
        <label class="snap"><span class="check on"></span>Vertex</label>
        <label class="snap off"><span class="check"></span>On curve</label>
        <label class="snap off"><span class="check"></span>On surface</label>
        <label class="snap off"><span class="check"></span>On polysurface</label>
        <label class="snap off"><span class="check"></span>On mesh</label>
        <label class="snap"><span class="check"></span>Project</label>
        <label class="snap"><span class="check"></span>SmartTrack</label>
      </div>
    </div>
  </aside>

  <section class="center">
    <div class="view-tabs">
      <svg class="pane-icon" viewBox="0 0 28 25"><path d="M1 1H27V24H1ZM14 1V24M1 12H27" fill="none" stroke="#8a8a8a" stroke-width="2"/></svg>
      <svg class="pane-icon single" viewBox="0 0 28 25"><rect x="1" y="1" width="26" height="23" fill="none" stroke="#3d8bff" stroke-width="1.500"/></svg>
      <span class="view-tab active">Perspective</span>
      <span class="view-tab">Top</span>
      <span class="view-tab">Back</span>
      <span class="view-tab">Right</span>
      <span class="layouts">Layouts...</span>
    </div>
    <div class="viewport">
      <svg class="model" viewBox="333 228 2707 1956" xmlns="http://www.w3.org/2000/svg">
        <defs>
          <linearGradient id="capDark" x1="0" y1="0" x2="1" y2="0"><stop offset="0" stop-color="#777"/><stop offset=".5" stop-color="#bdbdbd"/><stop offset="1" stop-color="#ededed"/></linearGradient>
          <linearGradient id="capLight" x1="0" y1="0" x2="1" y2="0"><stop offset="0" stop-color="#e6e6e6"/><stop offset="1" stop-color="#f8f8f8"/></linearGradient>
          <linearGradient id="topA" x1="0" y1="0" x2="1" y2="0"><stop offset="0" stop-color="#fff"/><stop offset="1" stop-color="#e4e4e4"/></linearGradient>
          <linearGradient id="topB" x1="0" y1="0" x2="1" y2="0"><stop offset="0" stop-color="#f6f6f6"/><stop offset="1" stop-color="#e6e6e6"/></linearGradient>
          <linearGradient id="topC" x1="0" y1="0" x2="1" y2="0"><stop offset="0" stop-color="#eee"/><stop offset="1" stop-color="#dedede"/></linearGradient>
          <linearGradient id="topD" x1="0" y1="0" x2="1" y2="0"><stop offset="0" stop-color="#e2e2e2"/><stop offset="1" stop-color="#d6d6d6"/></linearGradient>
          <linearGradient id="topE" x1="0" y1="0" x2="1" y2="0"><stop offset="0" stop-color="#e4e4e4"/><stop offset="1" stop-color="#d0d0d0"/></linearGradient>
          <linearGradient id="topF" x1="0" y1="0" x2="1" y2="0"><stop offset="0" stop-color="#dcdcdc"/><stop offset="1" stop-color="#cfcfcf"/></linearGradient>
        </defs>

        <!-- left group, traced at 1.96 x 1.742 -->
        <g transform="translate(1000 720) scale(.5102 .574)">
          <path class="wall" d="M222 363 1337 166 1337 304 260 497Z"/>
          <path class="cap-d" d="M155 340Q170 370 222 363L260 497Q210 505 195 475Z"/>
          <path class="cap-l" d="M1337 166Q1378 160 1378 130L1376 265Q1370 295 1337 304Z"/>
          <path fill="url(#topA)" d="M143 285Q145 250 190 243L1300 52Q1345 48 1360 78L1378 130Q1378 160 1337 166L222 363Q170 370 155 340Z"/>

          <path class="wall" d="M160 683 1010 526 1022 657 203 810Z"/>
          <path class="cap-d" d="M87 665Q100 690 160 683L203 810Q150 820 130 790Z"/>
          <path class="cap-l" d="M1010 526Q1060 520 1064 490L1075 622Q1070 650 1022 657Z"/>
          <path fill="url(#topB)" d="M79 630Q85 600 135 588L985 433Q1040 428 1053 460L1064 490Q1060 520 1010 526L160 683Q100 690 87 665Z"/>

          <path class="wall" d="M240 1015 1105 847 1113 972 280 1137Z"/>
          <path class="cap-d" d="M165 990Q185 1015 240 1015L280 1137Q225 1140 205 1105Z"/>
          <path class="cap-l" d="M1105 847Q1155 835 1155 800L1163 925Q1155 960 1113 972Z"/>
          <path fill="url(#topC)" d="M158 955Q160 910 215 898L1075 736Q1135 735 1152 790 1155 835 1105 847L240 1015Q185 1015 165 990Z"/>

          <path class="wall" d="M170 1398 1415 1149 1413 1267 215 1512Z"/>
          <path class="cap-d" d="M95 1375Q110 1405 170 1398L215 1512Q165 1520 140 1480Z"/>
          <path class="cap-l" d="M1415 1149Q1465 1135 1465 1100L1462 1215Q1455 1255 1413 1267Z"/>
          <path fill="url(#topD)" d="M87 1335Q90 1290 145 1277L1385 1032Q1450 1030 1465 1095 1465 1135 1415 1149L170 1398Q110 1405 95 1375Z"/>
        </g>

        <!-- right group, traced at 1.633 x 1.508 -->
        <g transform="translate(1640 760) scale(.6122 .6633)">
          <path class="wall" d="M148 396 1058 220 1025 335 147 510Z"/>
          <path class="sliver" d="M41 262 72 360 75 470Q50 420 40 378Z"/>
          <path class="cap-d" d="M72 360Q90 402 148 396L147 510Q90 518 73 470Z"/>
          <path class="cap-l" d="M1058 220Q1095 212 1095 182L1060 300Q1055 325 1025 335Z"/>
          <path fill="url(#topE)" d="M41 262Q45 230 85 222L975 55Q1030 50 1050 95L1095 182Q1095 212 1058 220L148 396Q90 402 72 360Z"/>

          <path class="wall" d="M475 604 1197 458 1155 570 462 714Z"/>
          <path class="sliver" d="M396 555 385 670 379 655 392 540Z"/>
          <path class="cap-d" d="M398 560Q410 605 475 604L462 714Q395 720 385 670Z"/>
          <path class="cap-l" d="M1197 458Q1225 450 1222 445L1190 545Q1185 565 1155 570Z"/>
          <path fill="url(#topF)" d="M392 540Q395 510 435 500L1145 358Q1210 360 1232 420 1230 450 1197 458L475 604Q410 605 398 560Z"/>

          <path class="wall" d="M505 835 1338 660 1292 768 490 942Z"/>
          <path class="sliver" d="M420 785 410 890 405 875 418 770Z"/>
          <path class="cap-d" d="M424 790Q435 835 505 835L490 942Q420 945 410 890Z"/>
          <path class="cap-l" d="M1338 660Q1365 650 1365 645L1325 745Q1320 762 1292 768Z"/>
          <path fill="url(#topF)" d="M420 770Q425 735 465 725L1285 558Q1355 555 1373 622 1370 650 1338 660L505 835Q435 835 424 790Z"/>

          <path class="wall" d="M315 1295 1113 1112 1070 1215 305 1390Z"/>
          <path class="sliver" d="M208 1175 230 1255 225 1345 203 1285Z"/>
          <path class="cap-d" d="M228 1250Q250 1300 315 1295L305 1390Q240 1395 225 1345Z"/>
          <path class="cap-l" d="M1113 1112Q1140 1103 1140 1095L1105 1190Q1095 1210 1070 1215Z"/>
          <path fill="url(#topF)" d="M208 1175Q210 1135 250 1127L1045 955Q1100 950 1120 1000L1152 1070Q1150 1100 1113 1112L315 1295Q250 1300 230 1255Z"/>

          <path class="wall" d="M655 1443 1425 1265 1375 1358 635 1532Z"/>
          <path class="sliver" d="M565 1385 553 1485 545 1460 560 1375Z"/>
          <path class="cap-d" d="M570 1400Q590 1445 655 1443L635 1532Q570 1535 553 1485Z"/>
          <path class="cap-l" d="M1425 1265Q1450 1255 1450 1250L1400 1340Q1390 1355 1375 1358Z"/>
          <path fill="url(#topF)" d="M565 1365Q570 1330 610 1320L1375 1145Q1445 1145 1467 1220 1465 1250 1425 1265L655 1443Q590 1445 570 1400Z"/>
        </g>

        <!-- world axes -->
        <g class="axes">
          <path d="M390 2066 405 2111 405 2078M405 2111 463 2099"/>
          <text x="395" y="2064">y</text>
          <text x="410" y="2081">z</text>
          <text x="468" y="2102">x</text>
        </g>
      </svg>
      <div class="view-label">Perspective</div>
    </div>
  </section>

  <aside class="right-panel">
    <section class="props">
      <div class="panel-head">
        <div class="panel-title">Properties: Objects</div>
        <span class="gear-btn"><svg class="gear"><use href="#gear"/></svg><svg class="chev"><use href="#chev"/></svg></span>
        <div class="panel-tabs props-tabs">
          <svg><use href="#p-object"/></svg><svg><use href="#p-tube"/></svg><svg><use href="#p-check"/></svg><svg><use href="#p-attrs"/></svg><svg><use href="#p-page"/></svg><svg><use href="#p-box"/></svg><svg><use href="#p-bent"/></svg><svg><use href="#p-decal"/></svg><svg><use href="#p-bump"/></svg>
        </div>
      </div>
      <div class="prop-form">
        <div class="prop-row first"><span class="prop-label">Object type:</span><span>5 closed solid polysurfaces</span></div>
        <div class="prop-row tall"><span class="prop-label">Name:</span><span class="field"></span></div>
        <div class="prop-row"><span class="prop-label">Layer:</span><span class="popup">Layer 03<span class="popup-cap"><svg><use href="#updown"/></svg></span></span></div>
        <div class="prop-row"><span class="prop-label">Display Color:</span><span class="popup short">By Layer<span class="popup-cap"><svg><use href="#updown"/></svg></span></span><span class="swatch"></span></div>
        <div class="prop-row"><span class="prop-label">Linetype:</span><span class="popup">By Layer<span class="popup-cap"><svg><use href="#updown"/></svg></span></span></div>
        <div class="prop-row"><span class="prop-label">Print Color:</span><span class="popup short">By Layer<span class="popup-cap"><svg><use href="#updown"/></svg></span></span><span class="swatch"></span></div>
        <div class="prop-row last"><span class="prop-label">Print Width:</span><span class="combo">By Layer<span class="combo-cap"><svg><use href="#chev"/></svg></span></span></div>
        <hr class="sep">
        <div class="sec-title">Render Mesh Settings</div>
        <label class="check-row"><span class="check"></span>Custom Mesh</label>
        <div class="btn-row"><span class="push disabled">Adjust Settings</span></div>
        <hr class="sep">
        <div class="sec-title tight">Rendering</div>
        <label class="check-row"><span class="check on"></span>Casts shadows</label>
        <label class="check-row"><span class="check on"></span>Receives shadows</label>
        <hr class="sep flush">
        <div class="sec-title">Isocurve Density</div>
        <label class="check-row"><span class="check on"></span>Show isocurves</label>
        <div class="prop-row tall"><span class="prop-label">Density:</span><span class="field">1</span></div>
        <hr class="sep">
        <div class="match-row"><span class="push">Match</span></div>
      </div>
    </section>

    <section class="layers">
      <div class="panel-head short">
        <div class="panel-title">Panels: Layers</div>
        <span class="gear-btn"><svg class="gear"><use href="#gear"/></svg><svg class="chev"><use href="#chev"/></svg></span>
        <div class="panel-tabs">
          <svg><use href="#g-layers"/></svg><svg><use href="#g-doc"/></svg><svg><use href="#g-cube"/></svg><svg><use href="#g-scroll"/></svg><svg><use href="#g-monitor"/></svg><svg viewBox="0 0 60 60"><circle cx="30" cy="30" r="19.500" fill="none" stroke="#777" stroke-width="2"/><text class="icon-q" x="30" y="41" text-anchor="middle">?</text></svg><svg><use href="#g-tools"/></svg><svg><use href="#g-tube"/></svg><svg><use href="#g-dome"/></svg><svg><use href="#g-drop"/></svg>
        </div>
      </div>
      <div class="layer-head">
        <span>Name</span><span></span><span></span><span></span><span></span><span></span><span>Linetype</span>
      </div>
      <div class="layer-list">
        <div class="layer"><span class="layer-name">Default</span><span class="radio"></span><svg class="l-bulb"><use href="#bulb"/></svg><svg class="l-lock"><use href="#lock"/></svg><span class="chip black"></span><span class="dot"></span><span class="ltype">Continuous</span></div>
        <div class="layer"><span class="layer-name">Layer 01</span><span class="radio"></span><svg class="l-bulb"><use href="#bulb"/></svg><svg class="l-lock"><use href="#lock"/></svg><span class="chip red"></span><span class="dot"></span><span class="ltype">Continuous</span></div>
        <div class="layer"><span class="layer-name">Layer 02</span><span class="radio"></span><svg class="l-bulb"><use href="#bulb"/></svg><svg class="l-lock"><use href="#lock"/></svg><span class="chip purple"></span><span class="dot"></span><span class="ltype">Continuous</span></div>
        <div class="layer current"><span class="layer-name">Layer 03</span><span class="radio on"></span><svg class="l-bulb"><use href="#bulb"/></svg><svg class="l-lock"><use href="#lock"/></svg><span class="chip blue"></span><span class="dot"></span><span class="ltype">Continuous</span></div>
        <div class="layer selected"><span class="layer-name">Layer 04</span><span class="radio"></span><svg class="l-bulb"><use href="#bulb"/></svg><svg class="l-lock"><use href="#lock"/></svg><span class="chip green"></span><span class="dot"></span><span class="ltype">Continuous</span></div>
        <div class="layer"><span class="layer-name">Layer 05</span><span class="radio"></span><svg class="l-bulb"><use href="#bulb"/></svg><svg class="l-lock"><use href="#lock"/></svg><span class="chip white"></span><span class="dot"></span><span class="ltype">Continuous</span></div>
      </div>
      <div class="layer-foot">
        <span class="add-remove"><span class="ar-cell"><svg viewBox="0 0 24 24"><path d="M12 1V23M1 12H23" stroke="#555" stroke-width="2"/></svg></span><span class="ar-cell"><svg viewBox="0 0 24 24"><path d="M1 12H23" stroke="#555" stroke-width="3"/></svg></span></span>
        <span class="foot-gear"><svg class="gear"><use href="#gear"/></svg><svg class="chev"><use href="#chev"/></svg></span>
      </div>
    </section>
  </aside>
</main>

<footer class="statusbar">
  <span class="cmd-lines"></span>
  <span class="status-msg">Undoing Delete</span>
  <div class="status-right">
    <span class="units">Millimeters</span>
    <span class="cplane">CPlane<svg><use href="#updown"/></svg></span>
    <span class="coord x">X: 360.62</span>
    <span class="coord y">Y: -105.91</span>
    <span class="coord">Z: 0.00</span>
  </div>
</footer>

</body>
</html>
```

FILE: styles.css
```css
* {
  box-sizing: border-box;
}

html, body {
  margin: 0;
  width: 3584px;
  height: 2240px;
  overflow: hidden;
}

body {
  display: flex;
  flex-direction: column;
  font-family: Inter, "Liberation Sans", sans-serif;
  font-size: 22px;
  color: #1d1d1d;
  background: #ececec;
}

.sprite {
  position: absolute;
  width: 0;
  height: 0;
}

.icon-help {
  font: bold 38px "Liberation Serif", serif;
  fill: #fff;
}

.icon-q {
  font: 30px "Liberation Sans", sans-serif;
  fill: #777;
}

.icon-t {
  font: bold 52px "Liberation Serif", serif;
  fill: #5f86ee;
  stroke: #000;
  stroke-width: 1.5px;
}

/* Title bar */
.titlebar {
  display: flex;
  align-items: center;
  flex: none;
  height: 78px;
  padding: 4px 29px 0 28px;
  background: linear-gradient(#dedede, #c8c8c8);
  border-bottom: 2px solid #a2a2a2;
}

.side-toggle {
  width: 39px;
  height: 39px;
  flex: none;
}

.side-toggle.right {
  margin-left: 948px;
}

.modes {
  display: flex;
  gap: 22px;
  margin-left: 111px;
}

.mode {
  height: 31px;
  padding: 0 21px;
  line-height: 31px;
  font-size: 25px;
  font-weight: 500;
  color: #585858;
  border-radius: 6px;
}

.mode.on {
  width: 160px;
  padding: 0;
  text-align: center;
  background: #7e7e7e;
  color: #fff;
  font-weight: 600;
}

.title-status {
  display: flex;
  align-items: center;
  margin-left: auto;
}

.ring-btn {
  width: 40px;
  height: 42px;
  margin-left: 21px;
}

.ring-btn.small {
  width: 38px;
  height: 34px;
  margin-left: 0;
}

.layer-pick {
  display: flex;
  align-items: center;
  width: 386px;
  height: 36px;
  margin-left: 20px;
  padding: 0 4px 0 10px;
  border-radius: 6px;
  border-bottom: 2px solid #aaa;
  background: linear-gradient(#fbfbfb, #ededed);
  font-size: 22px;
  color: #555;
}

.layer-swatch {
  width: 28px;
  height: 28px;
  background: #0a3cff;
  border: 3px solid #000;
}

.layer-pick-name {
  flex: 1;
  text-align: center;
}

/* Tabs */
.tabbar {
  display: flex;
  flex: none;
  height: 36px;
  padding-left: 14px;
  background: linear-gradient(#d6d6d6, #d0d0d0);
  border-bottom: 2px solid #8e8e8e;
}

.tab {
  height: 34px;
  padding: 0 20.900px;
  line-height: 33px;
  font-size: 19px;
  font-weight: 600;
  color: #111;
  background: linear-gradient(#e2e2e2, #d4d4d4);
  border-right: 2px solid #b4b4b4;
  border-radius: 8px 8px 0 0;
}

.tab.active {
  height: 36px;
  padding: 0 20px;
  color: #0a6cff;
  background: #ededed;
  border-left: 2px solid #b4b4b4;
}

/* Toolbars */
.toolbar {
  display: flex;
  flex: none;
  height: 62px;
  background: #ededed;
  border-bottom: 2px solid #d8d8d8;
}

.tool {
  position: relative;
  display: block;
  flex: none;
  width: 60px;
  height: 60px;
}

.tool svg {
  display: block;
  width: 60px;
  height: 60px;
}

.menu::after {
  content: "";
  position: absolute;
  left: 43px;
  top: 43px;
  border-left: 5px solid transparent;
  border-right: 5px solid transparent;
  border-top: 11px solid #444;
}

.workspace {
  display: flex;
  flex: 1;
  min-height: 0;
}

/* Left panel */
.left-panel {
  display: flex;
  flex-direction: column;
  flex: none;
  width: 333px;
  border-right: 2px solid #8f8f8f;
}

.left-head {
  flex: none;
  height: 52px;
  background: linear-gradient(#f7f7f7, #e8e8e8);
  border-bottom: 2px solid #d8d8d8;
}

.left-tools {
  flex: 1;
  padding: 21px 0 0;
}

.command {
  width: 297px;
  height: 41px;
  margin-left: 17px;
  padding-left: 6px;
  line-height: 41px;
  font-size: 25px;
  color: #c4c4c4;
  background: #fff;
  border: 2px solid #c8c8c8;
}

.tool-grid {
  display: grid;
  grid-template-columns: repeat(5, 60px);
  grid-auto-rows: 60px;
  margin-top: 17px;
}

.snaps {
  flex: none;
  height: 697px;
  padding-top: 8px;
  border-top: 3px solid #808080;
  overflow: hidden;
}

.snap {
  display: flex;
  align-items: center;
  height: 36px;
  padding-left: 40px;
}

.snap-list {
  margin-top: 11px;
}

.snap .check {
  margin-right: 11px;
}

.snap .radio {
  margin: 0 8px 0 -2px;
}

.snap.off {
  color: #b4b4b4;
}

.snap.off .check {
  background: #f2f2f2;
  border-color: #d8d8d8;
}

.check {
  position: relative;
  flex: none;
  width: 24px;
  height: 24px;
  background: #fff;
  border: 1px solid #bcbcbc;
  border-radius: 5px;
}

.check.on {
  background: #2f7ff7;
  border-color: #2f7ff7;
}

.check.on::after {
  content: "";
  position: absolute;
  left: 8px;
  top: 3px;
  width: 7px;
  height: 13px;
  border-right: 3px solid #fff;
  border-bottom: 3px solid #fff;
  transform: rotate(42deg);
}

.radio {
  position: relative;
  flex: none;
  width: 28px;
  height: 28px;
  background: #fff;
  border: 1px solid #c2c2c2;
  border-radius: 50%;
}

.radio.on {
  background: #3a86fb;
  border-color: #3a86fb;
}

.radio.on::after {
  content: "";
  position: absolute;
  left: 9px;
  top: 9px;
  width: 8px;
  height: 8px;
  background: #fff;
  border-radius: 50%;
}

/* Viewport */
.center {
  display: flex;
  flex-direction: column;
  flex: 1;
  min-width: 0;
  border-right: 2px solid #8a8a8a;
}

.view-tabs {
  display: flex;
  align-items: center;
  flex: none;
  height: 52px;
  padding-left: 21px;
  background: linear-gradient(#f7f7f7, #e6e6e6);
  border-bottom: 2px solid #7a7a7a;
  font-size: 25.500px;
  color: #6c6c6c;
}

.pane-icon {
  width: 28px;
  height: 25px;
  margin-right: 36px;
}

.pane-icon.single {
  margin-right: 30px;
}

.view-tab {
  height: 28px;
  padding: 0 38px 0 37px;
  line-height: 30px;
  border-left: 2px solid #9a9a9a;
}

.view-tab.active {
  color: #1a78f5;
}

.layouts {
  margin-left: auto;
  margin-right: 23px;
  font-size: 24px;
  color: #8a8a8a;
}

.viewport {
  position: relative;
  flex: 1;
  background: #9aa1a9;
}

.model {
  position: absolute;
  left: 0;
  top: 0;
  width: 100%;
  height: 100%;
}

.model path {
  stroke: #111;
  stroke-width: 1.700px;
  stroke-linejoin: round;
  vector-effect: non-scaling-stroke;
}

.wall {
  fill: #e5e5e5;
}

.cap-d {
  fill: url(#capDark);
}

.cap-l {
  fill: url(#capLight);
}

.sliver {
  fill: #555;
}

.axes path {
  fill: none;
  stroke: #555;
  stroke-width: 1.500px;
}

.axes text {
  font-size: 30px;
  fill: #555;
}

.view-label {
  position: absolute;
  left: 2px;
  top: 2px;
  width: 160px;
  height: 40px;
  line-height: 42px;
  text-align: center;
  font-size: 25px;
  font-weight: 600;
  color: #fff;
  background: #00508f;
}

/* Right panel */
.right-panel {
  display: flex;
  flex-direction: column;
  flex: none;
  width: 542px;
  min-height: 0;
}

.props {
  flex: none;
  height: 1004px;
}

.panel-head {
  position: relative;
  height: 176px;
  background: linear-gradient(#f8f8f8, #e6e6e6);
  border-bottom: 2px solid #dcdcdc;
}

.panel-head.short {
  height: 177px;
}

.panel-title {
  height: 46px;
  padding-right: 38px;
  line-height: 48px;
  text-align: center;
  font-size: 21px;
}

.gear-btn {
  position: absolute;
  right: 4px;
  top: 9px;
  display: flex;
  align-items: center;
  justify-content: center;
  gap: 4px;
  width: 55px;
  height: 32px;
  border: 2px solid #a8a8a8;
  border-radius: 8px;
}

.gear {
  width: 24px;
  height: 24px;
}

.chev {
  width: 12px;
  height: 10px;
  color: #333;
}

.panel-tabs {
  display: flex;
  flex-wrap: wrap;
  justify-content: center;
  width: 528px;
  margin-top: 1px;
}

.props-tabs {
  margin-top: 2px;
}

.panel-tabs svg {
  width: 60px;
  height: 60px;
}

.prop-form {
  padding: 8px 16px 0;
}

.prop-row {
  display: flex;
  align-items: center;
  height: 52px;
}

.prop-row.first {
  height: 45px;
}

.prop-row.tall {
  height: 54px;
}

.prop-row.last {
  height: 50px;
}

.prop-label {
  flex: none;
  width: 144px;
  margin-right: 19px;
  text-align: right;
  white-space: nowrap;
}

.field {
  flex: none;
  width: 346px;
  height: 36px;
  padding-left: 7px;
  line-height: 34px;
  background: #fff;
  border: 2px solid #c8c8c8;
}

.popup,
.combo {
  position: relative;
  display: block;
  flex: none;
  width: 346px;
  height: 34px;
  padding-left: 16px;
  line-height: 34px;
  background: #fff;
  border-radius: 6px;
  box-shadow: 0 1px 2px #999;
}

.popup.short {
  width: 258px;
  margin-right: 17px;
}

.popup-cap,
.combo-cap {
  position: absolute;
  right: 0;
  top: 0;
  display: flex;
  align-items: center;
  justify-content: center;
  width: 29px;
  height: 34px;
  background: linear-gradient(#3f8fff, #0a62e6);
  border-radius: 0 6px 6px 0;
  color: #fff;
}

.popup-cap svg {
  width: 14px;
  height: 22px;
}

.combo {
  height: 39px;
  padding-left: 8px;
  line-height: 41px;
  border-radius: 0 6px 6px 0;
  border: 1px solid #c8c8c8;
  box-shadow: none;
}

.combo-cap {
  right: -1px;
  top: -1px;
  width: 35px;
  height: 39px;
}

.combo-cap svg {
  width: 14px;
  height: 10px;
}

.swatch {
  flex: none;
  width: 72px;
  height: 36px;
  background: #0a3cff;
  border: 3px solid #444;
}

.sep {
  height: 2px;
  margin: 9px 0 0;
  border: 0;
  background: #d6d6d6;
}

.sep.flush {
  margin-top: 1px;
}

.sec-title {
  height: 31px;
  margin-bottom: 12px;
  padding-top: 11px;
  line-height: 21px;
}

.sec-title.tight {
  margin-bottom: 0;
}

.check-row {
  display: flex;
  align-items: center;
  height: 40px;
  padding-left: 142px;
}

.check-row .check {
  margin-right: 11px;
}

.btn-row {
  height: 52px;
  padding: 10px 0 0 163px;
  margin-bottom: -8px;
}

.push {
  display: inline-block;
  height: 32px;
  padding: 0 15px;
  line-height: 32px;
  text-align: center;
  background: #fff;
  border-radius: 6px;
  box-shadow: 0 1px 2px #999;
}

.push.disabled {
  width: 189px;
  color: #bcbcbc;
  background: #f4f4f4;
  box-shadow: 0 0 1px #bbb;
}

.match-row {
  height: 52px;
  padding: 9px 0 0 207px;
}

.match-row .push {
  width: 95px;
  padding: 0;
}

/* Layers panel */
.layers {
  display: flex;
  flex-direction: column;
  flex: 1;
  min-height: 0;
  border-top: 2px solid #888;
}

.layer-head {
  display: grid;
  grid-template-columns: 141px 36px 36px 44px 58px 46px 1fr;
  flex: none;
  height: 47px;
  padding: 4px 0 7px;
  line-height: 36px;
  background: #f0f0f0;
  border-bottom: 3px solid #cfcfcf;
}

.layer-head span {
  padding-left: 9px;
  border-right: 2px solid #dadada;
}

.layer-head span:last-child {
  padding-left: 10px;
  border-right: 0;
}

.layer-list {
  flex: 1;
  background: #fff;
}

.layer {
  display: grid;
  grid-template-columns: 145px 28px 44px 34px 49px 47px 1fr;
  align-items: center;
  height: 34px;
}

.layer.selected {
  height: 32px;
  margin-bottom: 2px;
  background: #0a64e0;
  color: #fff;
}

.layer-name {
  padding-left: 39px;
}

.l-bulb {
  width: 28px;
  height: 30px;
  justify-self: center;
}

.l-lock {
  width: 28px;
  height: 30px;
  justify-self: center;
}

.current .l-bulb,
.current .l-lock {
  opacity: .35;
}

.chip {
  width: 28px;
  height: 28px;
  justify-self: end;
  border: 3px solid #000;
}

.black { background: #000; }
.red { background: #d61f00; }
.purple { background: #8c40d0; }
.blue { background: #0a3cff; }
.green { background: #008c14; }
.white { background: #fff; }

.dot {
  width: 28px;
  height: 28px;
  justify-self: end;
  background: #fafafa;
  border: 2px solid #000;
  border-radius: 50%;
}

.ltype {
  padding: 2px 0 0 28px;
}

.layer-foot {
  display: flex;
  flex: none;
  height: 66px;
  padding: 13px 0 0 38px;
  background: #ebebeb;
  border-top: 2px solid #d8d8d8;
}

.add-remove {
  display: flex;
  width: 92px;
  height: 34px;
  background: linear-gradient(#fff, #f4f4f4);
  border-radius: 6px;
  box-shadow: 0 1px 2px #aaa;
}

.ar-cell {
  display: flex;
  align-items: center;
  justify-content: center;
  flex: 1;
}

.ar-cell svg {
  width: 22px;
  height: 22px;
}

.ar-cell:first-child {
  border-right: 1px solid #ccc;
}

.foot-gear {
  display: flex;
  align-items: center;
  justify-content: center;
  gap: 8px;
  width: 68px;
  height: 34px;
  margin-left: 36px;
  background: linear-gradient(#fff, #f4f4f4);
  border-radius: 6px;
  box-shadow: 0 1px 2px #aaa;
}

/* Status bar */
.statusbar {
  display: flex;
  align-items: center;
  flex: none;
  height: 56px;
  padding: 2px 0 0 9px;
  background: linear-gradient(#dadada, #d0d0d0);
}

.cmd-lines {
  width: 28px;
  height: 18px;
  background: repeating-linear-gradient(#555 0 1px, transparent 1px 4px);
}

.status-msg {
  margin-left: 6px;
}

.status-right {
  display: flex;
  align-items: center;
  width: 1020px;
  margin-left: auto;
}

.units {
  width: 147px;
}

.cplane {
  display: flex;
  align-items: center;
  justify-content: space-between;
  width: 138px;
  height: 32px;
  padding: 0 8px 0 12px;
  margin-right: 30px;
  border: 2px solid #a0a0a0;
  border-radius: 8px;
  color: #333;
}

.cplane svg {
  width: 14px;
  height: 22px;
  color: #888;
}

.coord.x {
  width: 164px;
}

.coord.y {
  width: 169px;
}
```
